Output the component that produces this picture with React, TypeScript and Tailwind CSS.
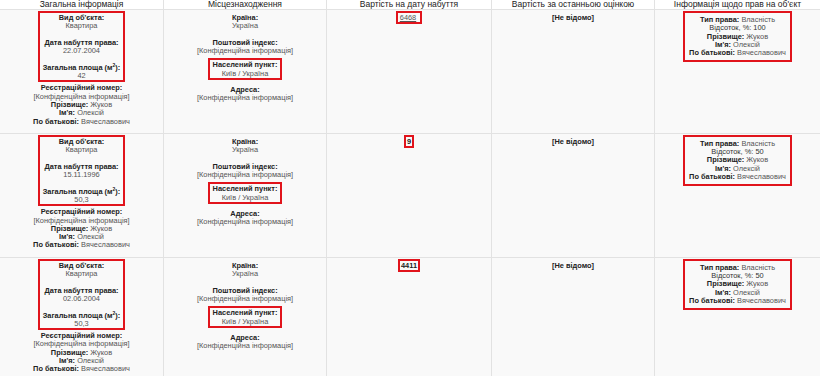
const ROWS = [
  { date: "22.07.2004", area: "42", cost: "6468", link: true, pct: "100" },
  { date: "15.11.1996", area: "50,3", cost: "9", link: false, pct: "50" },
  { date: "02.06.2004", area: "50,3", cost: "4411", link: false, pct: "50" },
];

const HEADERS = [
  "Загальна інформація",
  "Місцезнаходження",
  "Вартість на дату набуття",
  "Вартість за останньою оцінкою",
  "Інформація щодо прав на об'єкт",
];

const CONF = "[Конфіденційна інформація]";

// label + value on two lines
function Field({ label, value, className = "" }: { label: React.ReactNode; value: string; className?: string }) {
  return (
    <div className={className}>
      <div className="font-bold text-[#222]">{label}</div>
      <div className="text-[#555]">{value}</div>
    </div>
  );
}

// label and value inline
function Line({ label, value, plain }: { label: string; value: string; plain?: boolean }) {
  return (
    <div>
      <span className={plain ? "text-[#333]" : "font-bold text-[#222]"}>{label}</span>{" "}
      <span className={plain ? "text-[#333]" : "text-[#555]"}>{value}</span>
    </div>
  );
}

function Cell({ children, last }: { children: React.ReactNode; last?: boolean }) {
  return (
    <div
      className={`bg-[#f9f9f9] border-b border-[#e2e2e2] px-1 pt-px text-center ${
        last ? "" : "border-r"
      }`}
    >
      {children}
    </div>
  );
}

function Row({ row }: { row: (typeof ROWS)[number] }) {
  return (
    <>
      {/* Загальна інформація */}
      <Cell>
        <div className="inline-block border-2 border-[#e1141c] px-[3px] pt-px">
          <Field label="Вид об'єкта:" value="Квартира" />
          <Field label="Дата набуття права:" value={row.date} className="mt-[8.3px]" />
          <Field
            label={
              <>
                Загальна площа (м<sup className="text-[5px]">2</sup>):
              </>
            }
            value={row.area}
            className="mt-[8.3px]"
          />
        </div>
        <div className="mt-[2px] pb-[7px]">
          <Field label="Реєстраційний номер:" value={CONF} />
          <Line label="Прізвище:" value="Жуков" />
          <Line label="Ім'я:" value="Олексій" />
          <Line label="По батькові:" value="Вячеславович" />
        </div>
      </Cell>

      {/* Місцезнаходження */}
      <Cell>
        <div className="pt-[3px]">
          <Field label="Країна:" value="Україна" />
          <Field label="Поштовий індекс:" value={CONF} className="mt-[8.3px]" />
          <div className="mt-[3px] inline-block border-2 border-[#e1141c] px-[3px] pt-px">
            <Field label="Населений пункт:" value="Київ / Україна" />
          </div>
          <Field label="Адреса:" value={CONF} className="mt-[6px]" />
        </div>
      </Cell>

      {/* Вартість на дату набуття */}
      <Cell>
        <div
          className={`inline-block border-2 border-[#e1141c] leading-[9px] ${
            row.link ? "pl-[2px] pr-[4px]" : "px-px"
          }`}
        >
          {row.link ? (
            <span className="text-[#555] underline">{row.cost}</span>
          ) : (
            <span className="font-bold text-[#222]">{row.cost}</span>
          )}
        </div>
      </Cell>

      {/* Вартість за останньою оцінкою */}
      <Cell>
        <div className="pt-[3px] font-bold text-[#222]">[Не відомо]</div>
      </Cell>

      {/* Інформація щодо прав */}
      <Cell last>
        <div className="inline-block border-2 border-[#e1141c] px-[4px] pt-[3px] pb-[3px]">
          <Line label="Тип права:" value="Власність" />
          <Line label="Відсоток, %:" value={row.pct} plain />
          <Line label="Прізвище:" value="Жуков" />
          <Line label="Ім'я:" value="Олексій" />
          <Line label="По батькові:" value="Вячеславович" />
        </div>
      </Cell>
    </>
  );
}

export default function App() {
  return (
    <div className="w-[820px] h-[376px] overflow-hidden bg-white font-['Liberation_Sans',Arial,sans-serif] text-[7.4px] leading-[8.3px]">
      <div className="grid grid-cols-[164px_163px_165px_163px_165px]">
        {HEADERS.map((h, i) => (
          <div
            key={h}
            className={`h-[10px] overflow-hidden border-b border-[#e2e2e2] bg-white text-center text-[8.5px] leading-[8px] text-[#222] ${
              i < 4 ? "border-r" : ""
            }`}
          >
            {h}
          </div>
        ))}
        {ROWS.map((r, i) => (
          <Row key={i} row={r} />
        ))}
      </div>
    </div>
  );
}
